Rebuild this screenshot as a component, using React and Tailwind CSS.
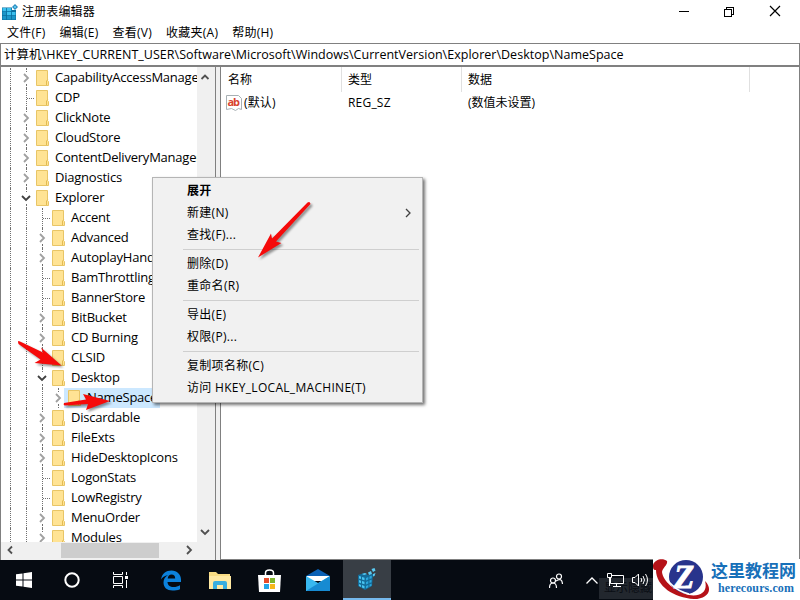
import React from "react";

const treeItems = [
    { name: "CapabilityAccessManager", level: 1, arrow: "right" },
    { name: "CDP", level: 1 },
    { name: "ClickNote", level: 1, arrow: "right" },
    { name: "CloudStore", level: 1, arrow: "right" },
    { name: "ContentDeliveryManager", level: 1, arrow: "right" },
    { name: "Diagnostics", level: 1, arrow: "right" },
    { name: "Explorer", level: 1, arrow: "down" },
    { name: "Accent", level: 2 },
    { name: "Advanced", level: 2, arrow: "right" },
    { name: "AutoplayHandlers", level: 2, arrow: "right" },
    { name: "BamThrottling", level: 2 },
    { name: "BannerStore", level: 2 },
    { name: "BitBucket", level: 2, arrow: "right" },
    { name: "CD Burning", level: 2, arrow: "right" },
    { name: "CLSID", level: 2 },
    { name: "Desktop", level: 2, arrow: "down" },
    { name: "NameSpace", level: 3, arrow: "right", selected: true },
    { name: "Discardable", level: 2, arrow: "right" },
    { name: "FileExts", level: 2, arrow: "right" },
    { name: "HideDesktopIcons", level: 2, arrow: "right" },
    { name: "LogonStats", level: 2 },
    { name: "LowRegistry", level: 2 },
    { name: "MenuOrder", level: 2, arrow: "right" },
    { name: "Modules", level: 2, arrow: "right" },
];

const menuGroups = [
    [{ label: "展开", bold: true }, { label: "新建(N)", submenu: true }, { label: "查找(F)..." }],
    [{ label: "删除(D)" }, { label: "重命名(R)" }],
    [{ label: "导出(E)" }, { label: "权限(P)..." }],
    [{ label: "复制项名称(C)" }, { label: "访问 HKEY_LOCAL_MACHINE(T)" }],
];

const Chevron = ({ dir = "right", className = "" }) => {
    const paths = {
        right: "M3 1 L7 5 L3 9",
        left: "M7 1.500 L3.500 5 L7 8.500",
        down: "M1 3 L5 7 L9 3",
        up: "M1.500 7 L5 3.500 L8.500 7",
    };
    return (
        <svg viewBox="0 0 10 10" className={`w-[10px] h-[10px] shrink-0 ${className}`} fill="none" stroke="currentColor">
            <path d={paths[dir]} />
        </svg>
    );
};

const Folder = () => (
    <svg viewBox="0 0 13 16" className="w-[13px] h-4 shrink-0">
        <path d="M.5 .5h11v10l1 1v4H.5z" fill="#ffe394" stroke="#e8c566" />
        <path d="M10.5 15v-4l1.2-1.2" fill="none" stroke="#e3bb52" />
    </svg>
);

// one 16px column of the tree: dotted guide, expander or branch stub
const Guide = ({ node, arrow }) => (
    <div className="w-4 h-5 shrink-0 flex flex-col items-center">
        {node && arrow ? (
            <>
                <div className="w-0 h-[4px] border-l border-dotted border-[#707070]" />
                <Chevron
                    dir={arrow}
                    className={`my-px -ml-px stroke-[1.8] ${arrow === "down" ? "text-[#404040]" : "text-[#a0a0a0]"}`}
                />
                <div className="w-0 h-[4px] border-l border-dotted border-[#707070]" />
            </>
        ) : (
            <div className="w-full h-full flex items-center">
                <div className="ml-2 w-0 h-full border-l border-dotted border-[#707070]" />
                {node && <div className="flex-1 border-t border-dotted border-[#707070]" />}
            </div>
        )}
    </div>
);

const TreeRow = ({ item }) => (
    <div className="h-5 flex items-center">
        <Guide />
        <Guide node={item.level === 1} arrow={item.arrow} />
        {item.level > 1 && <Guide node={item.level === 2} arrow={item.arrow} />}
        {item.level > 2 && <Guide node arrow={item.arrow} />}
        <div className={`h-5 flex items-center whitespace-nowrap ${item.selected ? "-ml-0.5 pl-1 w-24 bg-[#cce8ff]" : "pl-0.5"}`}>
            <Folder />
            <span className="ml-1.5 text-[13px] tracking-[-0.22px]">{item.name}</span>
        </div>
    </div>
);

const RegIcon = ({ className }) => (
    <svg viewBox="0 0 16 16" className={className}>
        <path d="M0 3.500h10v2.500h4v10H0z" fill="#0b6f9f" />
        <path d="M.5 4h3.700v3.300H.5zM5 4h4.200v3.300H5zM5 8h4.200v3.300H5zM10 8h3.500v3.300H10z" fill="#3cc0ee" />
        <path d="M.5 8h3.700v3.300H.5zM.5 12h3.700v3.500H.5zM5 12h4.200v3.500H5zM10 12h3.500v3.500H10z" fill="#1d96c8" />
        <path d="M13 0l3 3-3 3-3-3z" fill="#2587bd" />
        <path d="M13 1.500l1.500 1.500-1.500 1.500-1.500-1.500z" fill="#63cdf2" />
    </svg>
);

// tilted cube version shown on the taskbar button
const RegCube = () => (
    <svg viewBox="0 0 20 22" className="w-5 h-[22px]">
        <path d="M1 7l6-2 4 2 5-1-1 12-7 4-7-4z" fill="#146c9a" />
        <path d="M2 8l2 .6v2.500l-2-.6zM5 9l2.500.8v2.500L5 11.500zM2 12l2 .7v2.500l-2-.7zM5 13l2.500.8v2.500L5 15.500zM2 16l2 .9V19l-2-1zM5 17l2.500.9v2.500L5 19.400z" fill="#48c4f0" />
        <path d="M9 10l2.300-1v2.500L9 12.500zM12.500 8.500l2.200-.8v2.500l-2.200.9zM9 14l2.300-1v2.500L9 16.500zM12.500 12.500l2-.8v2.500l-2 .9zM9 18l2.300-1v2.300L9 20.500zM12.500 16.500l2-.8v2l-2 1z" fill="#2ba6dc" />
        <path d="M5 6l3-1 2 1-3 1zM11 4.500l3-1.500 1 3-3 1zM14.500 1l3-1 1 2.500-2.500 1.500zM16 6l2.500-1-1 3-1.500.5z" fill="#5acbf3" />
    </svg>
);

const TitleBar = () => (
    <div className="h-6 flex items-center pl-[2px]">
        <RegIcon className="w-4 h-4" />
        <span className="ml-[4px] text-xs tracking-[0.15px]">注册表编辑器</span>
        <svg viewBox="0 0 110 14" className="ml-auto mr-[17px] mb-[2px] w-[110px] h-[14px]" fill="none" stroke="#000" shapeRendering="crispEdges">
            <path d="M6 7.500h10M51.500 5.500h7v7h-7zM53.500 5v-2h7v7h-2" />
            <path d="M97 2l10 10M107 2l-10 10" shapeRendering="auto" strokeWidth="1.2" />
        </svg>
    </div>
);

const MenuBar = () => (
    <div className="h-[19px] flex items-center pl-[7px] gap-[14px] text-xs tracking-[0.25px] -mt-px mb-px">
        {["文件(F)", "编辑(E)", "查看(V)", "收藏夹(A)", "帮助(H)"].map(m => (
            <span key={m}>{m}</span>
        ))}
    </div>
);

const Tree = () => (
    <div className="w-[216px] h-full flex flex-col border-l border-r border-[#808080]">
        <div className="flex-1 min-h-0 flex">
            <div className="flex-1 min-w-0 overflow-hidden pl-[1px] pt-px">
                {treeItems.map(item => (
                    <TreeRow key={item.name} item={item} />
                ))}
            </div>
            <div className="w-[18px] pr-[3px] bg-[#f0f0f0] flex flex-col items-center justify-between py-[5px] text-[#505050] stroke-2">
                <Chevron dir="up" className="stroke-[1.8]" />
                <Chevron dir="down" className="stroke-[1.8]" />
            </div>
        </div>
        <div className="h-[18px] pb-[2px] bg-[#f0f0f0] flex items-center pl-1">
            <Chevron dir="left" className="text-[#505050] stroke-[1.8]" />
            <div className="ml-[46px] w-[98px] h-[15px] bg-[#cdcdcd]" />
            <Chevron dir="right" className="ml-[25px] text-[#505050] stroke-[1.8]" />
        </div>
    </div>
);

const ValueList = () => (
    <div className="flex-1 h-full border-x border-b border-[#808080] text-xs">
        <div className="h-[26px] flex items-start">
            <div className="w-[121px] h-[25px] pl-[7px] pt-[5px] border-r border-[#e0e0e0]">名称</div>
            <div className="w-[120px] h-[25px] pl-[6px] pt-[5px] border-r border-[#e0e0e0]">类型</div>
            <div className="w-[288px] h-[25px] pl-[6px] pt-[5px] border-r border-[#e0e0e0]">数据</div>
        </div>
        <div className="h-5 flex items-center">
            <div className="w-[127px] pl-[5px] flex items-center">
                <svg viewBox="0 0 16 16" className="w-4 h-4">
                    <path d="M.5.500h12l3 3v11l-3-1-3 2-4-2-5 1z" fill="#fff" stroke="#a8b0b4" />
                    <text x="1.500" y="10.500" fontSize="11" fontWeight="bold" fontFamily="Open Sans" fill="#d9432f" textLength="12.500">ab</text>
                </svg>
                <span className="ml-[2px] tracking-[0.15px]">(默认)</span>
            </div>
            <div className="w-[120px] tracking-[0.2px]">REG_SZ</div>
            <div>(数值未设置)</div>
        </div>
    </div>
);

const ContextMenu = () => (
    <div className="absolute left-[152px] top-[177px] w-[271px] h-[226px] bg-[#f1f1f1] border border-[#b5b5b5] shadow-[2px_2px_3px_rgba(0,0,0,0.55)] pt-[2px] text-xs">
        {menuGroups.map((group, i) => (
            <div key={i}>
                {i > 0 && <div className="h-[7px] flex items-center ml-[30px] mr-[3px]"><div className="w-full h-px bg-[#cfcfcf]" /></div>}
                {group.map(({ label, bold, submenu }) => (
                    <div key={label} className={`h-[22px] pl-[34px] pr-[9px] flex items-center justify-between tracking-[0.3px] ${bold ? "font-bold" : ""}`}>
                        <span>{label}</span>
                        {submenu && <Chevron className="text-[#404040] stroke-[1.3]" />}
                    </div>
                ))}
            </div>
        ))}
    </div>
);

const RedArrows = () => (
    <svg viewBox="0 0 800 600" className="absolute inset-0 w-[800px] h-[600px] pointer-events-none drop-shadow-[2px_2px_1px_rgba(0,0,0,0.4)]" fill="#f50a0a">
        <path d="M307.500 202.500Q310 201 310.500 204L276 241.500l5.500 1.500-23.500 14.500 13-24 1 5z" />
        <path d="M18 342Q18 340.500 20 341.500L43 352.500l-2-5 20.500 18-27-2.500 6-3.500-22-15.500z" />
        <path d="M64 403L86 399.500l-3-5.500 27 7-24 9 2-6-23.500 1.500Q63 404.500 64 403z" />
    </svg>
);

const Taskbar = () => (
    <div className="h-10 bg-[#060b12] flex items-center text-white">
        <div className="w-12 flex justify-center">
            <svg viewBox="0 0 16 16" className="w-4 h-4" fill="#fff"><path d="M0 2.300 6.500 1.400V7.500H0zM7.500 1.200 16 0v7.500H7.500zM0 8.500h6.500v6.100L0 13.700zM7.500 8.500H16V16l-8.500-1.200z" /></svg>
        </div>
        <div className="w-12 flex justify-center">
            <svg viewBox="0 0 16 16" className="w-4 h-4" fill="none" stroke="#fff" strokeWidth="2"><circle cx="8" cy="8" r="6.700" /></svg>
        </div>
        <div className="w-12 flex justify-center">
            <svg viewBox="0 0 17 16" className="w-[17px] h-4" fill="none" stroke="#fff"><path d="M1.500 0v2.500h9V0M1.500 4.500h9v7h-9zM1.500 16v-2.500h9V16M14.500 0v3M14.500 8v8" /><path d="M13 4h3v3h-3z" fill="#fff" stroke="none" /></svg>
        </div>
        <div className="w-[54px] flex justify-center">
            <svg viewBox="0 0 20 20" className="w-5 h-[21px]"><path d="M0 9C1 3 5 0 10.500 0 16 0 20 4 20 9v2.500H6.500c0 3 2.500 5 6 5 2.500 0 4.500-.7 6.500-1.800v4C16.500 19.700 14 20 11.500 20 6 20 2.500 17 2.500 12c0-3.200 1.500-5.800 4.500-7.300C3.500 5 1.300 7 0 9zM6.700 8h7.500c0-2.500-1.300-4-3.700-4C8.500 4 7 5.500 6.700 8z" fill="#0c82dc" /></svg>
        </div>
        <div className="w-[44px] flex justify-center">
            <svg viewBox="0 0 22 19" className="w-[22px] h-[19px]"><path d="M0 1h7l2 2h12v15H0z" fill="#f8dc83" /><path d="M0 5h22v13H0z" fill="#ffe9a2" /><path d="M4 18v-6q0-2 2-2h10q2 0 2 2v6h-4v-4H8v4z" fill="#37aee0" /></svg>
        </div>
        <div className="w-[54px] flex justify-center">
            <svg viewBox="0 0 23 23" className="w-[23px] h-[23px]"><path d="M7.500 6V4q0-3 4-3t4 3v2" fill="none" stroke="#fff" strokeWidth="1.500" /><path d="M0 6h23l-1 17H1z" fill="#fff" /><path d="M6 9h5v5H6z" fill="#e74c2b" /><path d="M12 9h5v5h-5z" fill="#7db52b" /><path d="M6 15h5v5H6z" fill="#23a5e8" /><path d="M12 15h5v5h-5z" fill="#f6b71b" /></svg>
        </div>
        <div className="w-[49px] pr-1.5 flex justify-center">
            <svg viewBox="0 0 24 22" className="w-6 h-[22px]"><path d="M0 7 12 0l12 7v3H0z" fill="#0b61b5" /><path d="M1 7h22v5H1z" fill="#fff" /><path d="M0 7l12 7 12-7v15H0z" fill="#38b8ef" /><path d="M0 22 24 7v15z" fill="#178bd2" /></svg>
        </div>
        <div className="w-12 h-10 flex items-center justify-center bg-[#383e45] border-b-2 border-[#76b9ed] -ml-[2px]">
            <RegCube />
        </div>
        <svg viewBox="0 0 14 15" className="ml-[158px] w-[14px] h-[15px]" fill="none" stroke="#fff" strokeWidth="1.200"><circle cx="10" cy="3.500" r="2.500" /><circle cx="4" cy="7.500" r="2.500" /><path d="M.5 15q0-5 3.500-5t3.500 5M7 8q6-4 6.500 3" /></svg>
        <svg viewBox="0 0 12 7" className="ml-[23px] w-3 h-[7px]" fill="none" stroke="#fff" strokeWidth="1.300"><path d="M.5 6.500 6 1l5.500 5.500" /></svg>
        <div className="relative w-[55px] h-full flex items-center">
            <span className="absolute left-[1px] top-[18px] w-[54px] h-[21px] bg-[#22272e] pl-[5px] text-[#0a0e14] text-xs leading-5 whitespace-nowrap">显示隐藏</span>
            <svg viewBox="0 0 17 14" className="relative ml-[9px] w-[17px] h-[14px]" fill="none" stroke="#fff"><path d="M5 2.500h11.500v8H3.500V5M.5.500h4v4h-4zM2.500 5v8M9.500 11v2M6 13.500h8" /></svg>
            <svg viewBox="0 0 17 14" className="relative ml-2 w-[17px] h-[14px]" fill="none" stroke="#fff"><path d="M.5 4.500h2.500l3.500-3.500v12L3 9.500H.5zM9 5q1.500 2 0 4M11 3q3 4 0 8M13.500 1q4 6 0 12" /></svg>
        </div>
        <div className="flex-1 -mt-px h-[41px] bg-white flex items-center">
            <svg viewBox="0 0 58 41" className="w-[58px] h-[41px]">
                <circle cx="33" cy="18" r="17" fill="#28348c" />
                <path d="M0 6C2 0 10-1 14 2 15 6 10 8 9 13 10 22 22 33 36 36 48 38 55 32 52 22 61 31 54 40 41 40 21 39 3 27 3 11 0 11 0 9 0 6z" fill="#b51218" />
                <path d="M11 11C13 23 23 32 36 35" fill="none" stroke="#fff" strokeWidth="1.500" />
                <text x="21" y="29" fontFamily="Liberation Serif" fontSize="33" fontWeight="bold" fontStyle="italic" fill="#fff" stroke="#fff">Z</text>
            </svg>
            <div className="flex flex-col -mt-[3px]">
                <span className="text-[17px] leading-[20px] font-bold text-[#1770b9] whitespace-nowrap">这里教程网</span>
                <span className="pl-[7px] font-['Liberation_Serif'] text-[12px] leading-[15px] font-bold text-[#1770b9] tracking-[0.1px]">herecours.com</span>
            </div>
        </div>
    </div>
);

const App = () => {
    return (
        <div className="relative w-[800px] h-[600px] overflow-hidden bg-white text-black font-['Open_Sans','Noto_Sans_CJK_SC',sans-serif] flex flex-col">
            <TitleBar />
            <MenuBar />
            <div className="h-6 shrink-0 border-x border-t border-b-2 border-[#808080] flex items-center pt-px pl-[3px] text-[12.500px] tracking-[0.02px] whitespace-nowrap">
                计算机\HKEY_CURRENT_USER\Software\Microsoft\Windows\CurrentVersion\Explorer\Desktop\NameSpace
            </div>
            <div className="flex-1 min-h-0 flex gap-1 bg-[#f0f0f0]">
                <div className="bg-white"><Tree /></div>
                <div className="flex-1 bg-white"><ValueList /></div>
            </div>
            <Taskbar />
            <ContextMenu />
            <RedArrows />
        </div>
    );
};

export default App;
